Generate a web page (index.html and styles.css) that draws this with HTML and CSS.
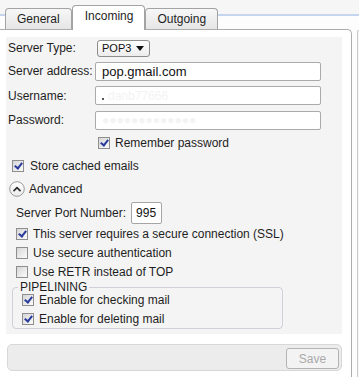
FILE: index.html
```html
<!DOCTYPE html>
<html>
<head>
<meta charset="utf-8">
<link rel="stylesheet" href="styles.css">
</head>
<body>
<div class="tabs">
  <div class="tab">General</div>
  <div class="tab active">Incoming</div>
  <div class="tab">Outgoing</div>
</div>
<div class="main">
  <div class="panel">
    <div class="box">
      <div class="frow"><span class="lbl">Server Type:</span><span class="select"><span>POP3</span><span class="arrow"></span></span></div>
      <div class="frow"><span class="lbl">Server address:</span><span class="input">pop.gmail.com</span></div>
      <div class="frow"><span class="lbl">Username:</span><span class="input faint"><span class="dot"></span>danb77666</span></div>
      <div class="frow"><span class="lbl">Password:</span><span class="input faint">&#9679;&#9679;&#9679;&#9679;&#9679;&#9679;&#9679;&#9679;&#9679;&#9679;&#9679;&#9679;&#9679;</span></div>
      <div class="crow remember"><span class="cb on"></span>Remember password</div>
      <div class="crow store"><span class="cb on"></span>Store cached emails</div>
      <div class="adv">
        <svg class="advicon" width="16" height="16" viewBox="0 0 16 16"><defs><linearGradient id="ag" x1="0" y1="0" x2="0" y2="1"><stop offset="0" stop-color="#ffffff"/><stop offset="1" stop-color="#ececec"/></linearGradient></defs><circle cx="8" cy="8" r="7.3" fill="url(#ag)" stroke="#9a9a9a" stroke-width="1"/><path d="M5 9.6 L8 6.6 L11 9.6" fill="none" stroke="#2e2e2e" stroke-width="1.7" stroke-linecap="round" stroke-linejoin="round"/></svg>
        <span>Advanced</span>
      </div>
      <div class="advbody">
        <div class="prow"><span>Server Port Number:</span><span class="port">995</span></div>
        <div class="crow"><span class="cb on"></span>This server requires a secure connection (SSL)</div>
        <div class="crow"><span class="cb"></span>Use secure authentication</div>
        <div class="crow"><span class="cb"></span>Use RETR instead of TOP</div>
        <div class="group">
          <span class="legend">PIPELINING</span>
          <div class="crow"><span class="cb on"></span>Enable for checking mail</div>
          <div class="crow"><span class="cb on"></span>Enable for deleting mail</div>
        </div>
      </div>
    </div>
    <div class="savebar"><span class="save">Save</span></div>
  </div>
  <div class="side"></div>
</div>
</body>
</html>
```
FILE: styles.css
```css
html, body {
  margin: 0;
  padding: 0;
}
body {
  width: 359px;
  height: 377px;
  overflow: hidden;
  font-family: "Liberation Sans", Arial, sans-serif;
  font-size: 12px;
  color: #1e1e1e;
  background: #fdfdfd;
}
.tabs {
  display: flex;
  align-items: flex-end;
  height: 29px;
  padding-left: 5px;
  background: linear-gradient(to bottom, #f6f6f6 0, #f6f6f6 14px, #c6d5ee 14px, #c6d5ee 16px, #fdfdfd 16px);
}
.tab {
  height: 20px;
  line-height: 20px;
  padding: 0 11px;
  border: 1px solid #a3a3a3;
  border-bottom: 0;
  border-radius: 4px 4px 0 0;
  background: linear-gradient(to bottom, #f7f7f7, #e6e6e6);
  color: #1e1e1e;
}
.tab.active {
  height: 24px;
  line-height: 21px;
  margin-bottom: -1px;
  padding: 0 11px 0 12px;
  background: #ffffff;
  position: relative;
  z-index: 1;
}
.main {
  display: flex;
}
.panel {
  width: 352px;
  height: 348px;
  box-sizing: border-box;
  border: 1px solid #acacac;
  border-left: 0;
  border-bottom: 0;
  border-radius: 0 5px 0 0;
  background: #ffffff;
  padding: 7px 0 0 6px;
}
.side {
  flex: 1;
  margin-left: 5px;
  margin-top: 1px;
  border-left: 1px solid #c9c9c9;
  border-top: 1px solid #c9c9c9;
  border-radius: 5px 0 0 0;
  background: #f7f7f7;
}
.box {
  width: 336px;
  height: 297px;
  box-sizing: border-box;
  background: #f4f4f4;
  padding: 0 0 4px 0;
}
.frow {
  display: flex;
  align-items: center;
  padding-left: 2px;
  height: 24px;
}
.frow:nth-child(1) { height: 22px; }
.frow:nth-child(3) { height: 25px; }
.lbl {
  width: 87px;
}
.select {
  display: flex;
  align-items: center;
  justify-content: space-between;
  width: 53px;
  height: 17px;
  box-sizing: border-box;
  margin-left: 2px;
  padding: 0 5px 0 4px;
  border: 1px solid #8d8d8d;
  border-radius: 3px;
  background: linear-gradient(to bottom, #ffffff, #ececec);
  font-size: 11px;
  color: #111;
}
.arrow {
  width: 0;
  height: 0;
  border-left: 4px solid transparent;
  border-right: 4px solid transparent;
  border-top: 5px solid #111;
}
.input {
  display: flex;
  align-items: center;
  width: 226px;
  height: 19px;
  box-sizing: border-box;
  padding-left: 6px;
  border: 1px solid #aaaaaa;
  border-radius: 2px;
  background: #ffffff;
  font-size: 13px;
  color: #111;
}
.input.faint {
  color: #f3f3f3;
  font-size: 12px;
}
.dot {
  width: 2px;
  height: 2px;
  background: #555;
  margin-right: 4px;
  margin-top: 6px;
}
.crow {
  display: flex;
  align-items: center;
  height: 19px;
  gap: 5px;
}
.remember {
  height: 21px;
  padding-left: 92px;
}
.store {
  height: 25px;
  padding-left: 6px;
  gap: 6px;
}
.cb {
  position: relative;
  width: 10px;
  height: 10px;
  flex: none;
  border: 1px solid #8e8e8e;
  background: linear-gradient(135deg, #d6d6d6, #fbfbfb);
}
.cb.on::after {
  content: "";
  position: absolute;
  left: 3px;
  top: 0px;
  width: 3px;
  height: 6px;
  border: solid #2a3b9d;
  border-width: 0 2px 2px 0;
  transform: rotate(38deg);
}
.adv {
  display: flex;
  align-items: center;
  height: 21px;
  padding-left: 3px;
  gap: 4px;
}
.advicon {
  display: block;
}
.advbody {
  padding-left: 10px;
}
.prow {
  display: flex;
  align-items: center;
  height: 22px;
  margin-top: 3px;
  gap: 5px;
}
.port {
  display: flex;
  align-items: center;
  width: 31px;
  height: 22px;
  box-sizing: border-box;
  padding-left: 4px;
  border: 1px solid #a5a5a5;
  border-radius: 2px;
  background: #ffffff;
  color: #111;
}
.group {
  position: relative;
  width: 271px;
  box-sizing: border-box;
  margin: 6px 0 0 -4px;
  padding: 2px 0 0 9px;
  border: 1px solid #cfd0d8;
  border-radius: 4px;
}
.legend {
  position: absolute;
  top: -7px;
  left: 5px;
  padding: 0 2px;
  background: #f4f4f4;
  line-height: 12px;
}
.savebar {
  display: flex;
  justify-content: flex-end;
  width: 335px;
  height: 27px;
  box-sizing: border-box;
  margin: 10px 0 0 1px;
  padding: 3px 2px 0 0;
  border: 1px solid #d7d7d7;
  border-radius: 5px;
  background: #ececec;
}
.save {
  display: flex;
  align-items: center;
  justify-content: center;
  width: 53px;
  height: 21px;
  box-sizing: border-box;
  border: 1px solid #b3b3b3;
  border-radius: 3px;
  background: #f3f3f3;
  color: #a9a9a9;
}
```
